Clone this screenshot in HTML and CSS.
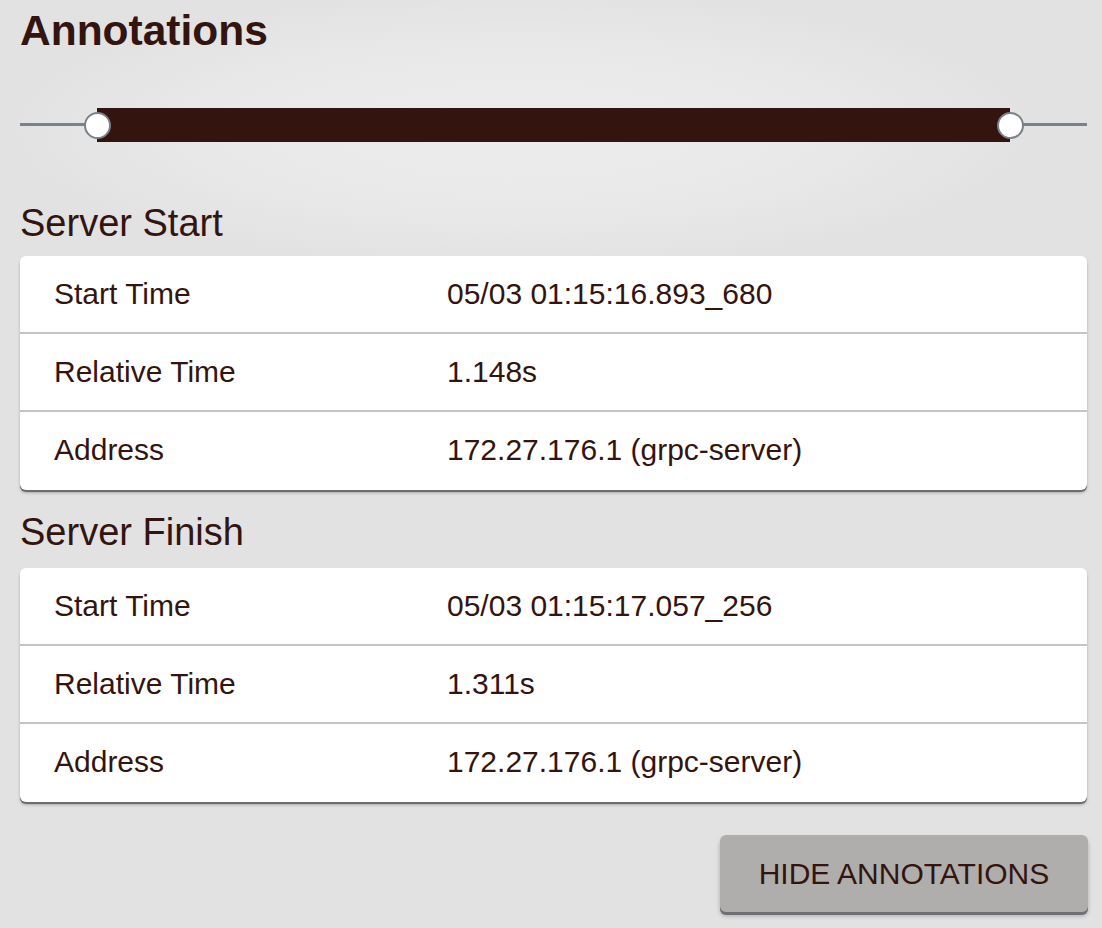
FILE: index.html
```html
<!DOCTYPE html>
<html lang="en">
<head>
<meta charset="utf-8">
<title>Annotations</title>
<link rel="stylesheet" href="styles.css">
</head>
<body>
<div class="panel">
  <h1 class="title">Annotations</h1>
  <div class="slider">
    <div class="rail"></div>
    <div class="range"></div>
    <div class="handle handle-left"></div>
    <div class="handle handle-right"></div>
  </div>

  <h2 class="section section-first">Server Start</h2>
  <div class="card card-first">
    <div class="row"><span class="label">Start Time</span><span class="value">05/03 01:15:16.893_680</span></div>
    <div class="row"><span class="label">Relative Time</span><span class="value">1.148s</span></div>
    <div class="row"><span class="label">Address</span><span class="value">172.27.176.1 (grpc-server)</span></div>
  </div>

  <h2 class="section section-next">Server Finish</h2>
  <div class="card card-next">
    <div class="row"><span class="label">Start Time</span><span class="value">05/03 01:15:17.057_256</span></div>
    <div class="row"><span class="label">Relative Time</span><span class="value">1.311s</span></div>
    <div class="row"><span class="label">Address</span><span class="value">172.27.176.1 (grpc-server)</span></div>
  </div>

  <div class="actions">
    <button class="btn">HIDE ANNOTATIONS</button>
  </div>
</div>
</body>
</html>
```

FILE: styles.css
```css
html, body {
  margin: 0;
  padding: 0;
}
body {
  width: 1102px;
  height: 928px;
  overflow: hidden;
  background-color: #e2e2e2;
  background-image: radial-gradient(ellipse 520px 140px at 520px 130px, #ececec 0%, #e9e9e9 55%, rgba(226,226,226,0) 100%);
  font-family: "Liberation Sans", Arial, sans-serif;
  color: #33140e;
}
.panel {
  padding: 0 15px 0 20px;
  display: flex;
  flex-direction: column;
}
.title {
  margin: 6px 0 0 0;
  font-size: 42.5px;
  line-height: 50px;
  font-weight: bold;
}
.slider {
  position: relative;
  height: 34px;
  margin-top: 52px;
}
.rail {
  position: absolute;
  left: 0;
  right: 0;
  top: 15px;
  height: 3px;
  background: #7b8189;
}
.range {
  position: absolute;
  left: 77px;
  right: 77px;
  top: 0;
  bottom: 0;
  background: #33140e;
}
.handle {
  position: absolute;
  top: 4px;
  width: 23px;
  height: 23px;
  margin-left: -13px;
  border: 2px solid #7b8189;
  border-radius: 50%;
  background: #ffffff;
}
.handle-left { left: 77px; }
.handle-right { left: calc(100% - 77px); }

.section {
  margin: 0;
  font-size: 38px;
  line-height: 44px;
  font-weight: normal;
}
.section-first { margin-top: 59px; }
.section-next { margin-top: 20px; }
.card {
  padding-bottom: 2px;
  background: #ffffff;
  border-radius: 6px;
  box-shadow: 0 2px 0 #6d6d6d, 0 3px 3px rgba(0,0,0,0.25);
  display: flex;
  flex-direction: column;
}
.card-first { margin-top: 11px; }
.card-next { margin-top: 14px; }
.row {
  display: flex;
  align-items: center;
  height: 76px;
  padding-left: 34px;
  font-size: 30px;
}
.row + .row {
  border-top: 2px solid #c4c4c4;
}
.label {
  width: 393px;
}
.actions {
  display: flex;
  justify-content: flex-end;
  margin-top: 33px;
}
.btn {
  width: 368px;
  height: 77px;
  margin-right: -1px;
  border: none;
  border-radius: 6px;
  background: #b0aeac;
  color: #33140e;
  font-family: "Liberation Sans", Arial, sans-serif;
  font-size: 30px;
  box-shadow: 0 3px 0 #6e7074, 0 4px 4px rgba(0,0,0,0.25);
  padding: 0;
}
```
